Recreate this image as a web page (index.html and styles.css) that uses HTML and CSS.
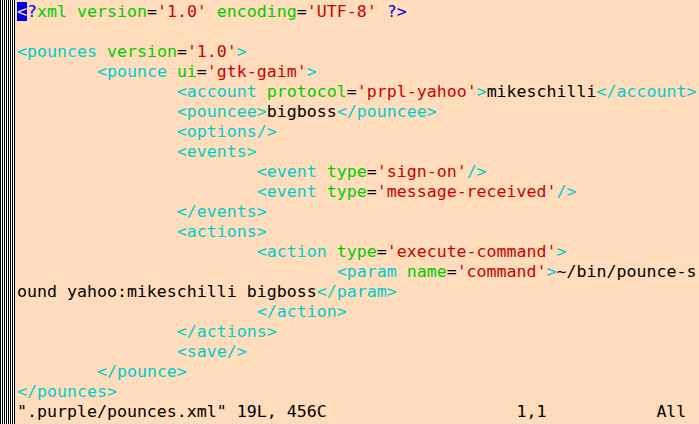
FILE: index.html
```html
<!DOCTYPE html>
<html lang="en">
<head>
    <meta charset="UTF-8">
    <title>pounces.xml - vim</title>
    <link rel="stylesheet" href="styles.css">
</head>
<body>
    <div class="terminal">
        <div class="scrollbar"></div>
        <pre class="buffer"><span class="cursor">&lt;</span><span class="pi">?</span><span class="attr">xml version</span>=<span class="val">'1.0'</span><span class="attr"> encoding</span>=<span class="val">'UTF-8'</span><span class="pi"> ?&gt;</span>

<span class="tag">&lt;pounces</span> <span class="attr">version</span>=<span class="val">'1.0'</span><span class="tag">&gt;</span>
        <span class="tag">&lt;pounce</span> <span class="attr">ui</span>=<span class="val">'gtk-gaim'</span><span class="tag">&gt;</span>
                <span class="tag">&lt;account</span> <span class="attr">protocol</span>=<span class="val">'prpl-yahoo'</span><span class="tag">&gt;</span>mikeschilli<span class="tag">&lt;/account&gt;</span>
                <span class="tag">&lt;pouncee&gt;</span>bigboss<span class="tag">&lt;/pouncee&gt;</span>
                <span class="tag">&lt;options/&gt;</span>
                <span class="tag">&lt;events&gt;</span>
                        <span class="tag">&lt;event</span> <span class="attr">type</span>=<span class="val">'sign-on'</span><span class="tag">/&gt;</span>
                        <span class="tag">&lt;event</span> <span class="attr">type</span>=<span class="val">'message-received'</span><span class="tag">/&gt;</span>
                <span class="tag">&lt;/events&gt;</span>
                <span class="tag">&lt;actions&gt;</span>
                        <span class="tag">&lt;action</span> <span class="attr">type</span>=<span class="val">'execute-command'</span><span class="tag">&gt;</span>
                                <span class="tag">&lt;param</span> <span class="attr">name</span>=<span class="val">'command'</span><span class="tag">&gt;</span>~/bin/pounce-s
ound yahoo:mikeschilli bigboss<span class="tag">&lt;/param&gt;</span>
                        <span class="tag">&lt;/action&gt;</span>
                <span class="tag">&lt;/actions&gt;</span>
                <span class="tag">&lt;save/&gt;</span>
        <span class="tag">&lt;/pounce&gt;</span>
<span class="tag">&lt;/pounces&gt;</span>
".purple/pounces.xml" 19L, 456C                   1,1           All</pre>
    </div>
</body>
</html>
```

FILE: styles.css
```css
body {
    margin: 0;
    background-color: #ffdcbb;
}
.terminal {
    display: flex;
    height: 424px;
    overflow: hidden;
}
.scrollbar {
    width: 15px;
    flex-shrink: 0;
    background: repeating-linear-gradient(to right, #000 0px, #000 1px, #fff 1px, #fff 2px);
}
.buffer {
    margin: 0;
    padding: 2px 0 0 2px;
    font-family: 'DejaVu Sans Mono', monospace;
    font-size: 16.6px;
    line-height: 20px;
    color: #000;
    white-space: pre;
}
.tag {
    color: #00cdcd;
}
.attr {
    color: #00cd00;
}
.val {
    color: #cd0000;
}
.pi {
    color: #0000ee;
}
.cursor {
    background-color: #0000ee;
    color: #ffdcbb;
}
```
